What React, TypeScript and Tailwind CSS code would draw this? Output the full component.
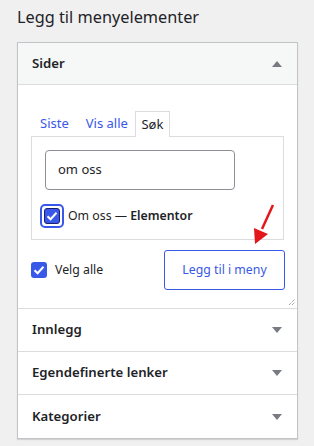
import React from "react";

const font = { fontFamily: '"Noto Sans", "Open Sans", sans-serif' };

const Caret = ({ up = false }: { up?: boolean }) => (
  <svg width="10" height="6" viewBox="0 0 10 6" className="mr-[15px]">
    {up ? <path d="M0 6 L5 0 L10 6 Z" fill="#787c82" /> : <path d="M0 0 L5 6 L10 0 Z" fill="#787c82" />}
  </svg>
);

const Section = ({ title }: { title: string }) => (
  <div className="flex h-[43px] items-center justify-between border-b border-[#dcdcde] pl-[14px] last:border-b-0">
    <span className="text-[13.2px] font-semibold text-[#1d2327]">{title}</span>
    <Caret />
  </div>
);

const Check = () => (
  <svg width="12" height="10" viewBox="0 0 12 10">
    <path d="M1.5 5.2 L4.6 8.2 L10.5 1.8" stroke="#fff" strokeWidth="2" fill="none" />
  </svg>
);

export default function App() {
  return (
    <div className="h-screen w-full bg-[#f0f0f1] pl-[17px] pt-[6px] text-[#1d2327]" style={font}>
      <h2 className="text-[16.3px] leading-[22px]">Legg til menyelementer</h2>
      <div className="mt-[14px] w-[281px] border border-[#c3c4c7] bg-white shadow-[0_1px_1px_rgba(0,0,0,0.12)]">
        <div className="flex h-[42px] items-center justify-between border-b border-[#dcdcde] bg-[#f6f7f7] pl-[14px]">
          <span className="text-[13.2px] font-semibold">Sider</span>
          <Caret up />
        </div>
        <div className="relative border-b border-[#dcdcde] px-[13px] pb-[18px] pt-[26px]">
          <div className="flex items-end pl-[9px] text-[13px]">
            <span className="mr-[17px] pb-[3px] text-[#3858e9]">Siste</span>
            <span className="mr-[7px] pb-[3px] text-[#3858e9]">Vis alle</span>
            <span className="-mb-px flex h-[26px] w-[35px] items-center justify-center border border-b-0 border-[#dcdcde] bg-white">Søk</span>
          </div>
          <div className="border border-[#dcdcde] px-[13px] pb-[11px] pt-[13px]">
            <div className="flex h-[40px] w-[190px] items-center rounded-[4px] border border-[#8c8f94] px-[12px] text-[13px]">
              om oss
            </div>
            <div className="mt-[14px] flex items-center">
              <span className="-ml-[5px] flex h-[24px] w-[24px] items-center justify-center rounded-[5px] border-2 border-[#3858e9]">
                <span className="flex h-[16px] w-[16px] items-center justify-center rounded-[3px] border border-[#1e1e6e] bg-[#3858e9]">
                  <Check />
                </span>
              </span>
              <span className="ml-[4px] text-[12.3px]">
                Om oss — <b className="font-semibold">Elementor</b>
              </span>
            </div>
          </div>
          <div className="mt-[10px] flex items-center justify-between">
            <div className="flex items-center">
              <span className="flex h-[16px] w-[16px] items-center justify-center rounded-[3px] bg-[#3858e9]">
                <Check />
              </span>
              <span className="ml-[8px] text-[12.3px]">Velg alle</span>
            </div>
            <div className="-mr-px flex h-[40px] w-[121px] items-center justify-center rounded-[3px] border border-[#3858e9] text-[12.3px] text-[#3858e9]">
              Legg til i meny
            </div>
          </div>
          <svg className="absolute bottom-[2px] right-[1px]" width="8" height="8" viewBox="0 0 8 8">
            <path d="M1 7 L7 1 M4 7 L7 4" stroke="#787c82" strokeWidth="1" strokeDasharray="1 1" />
          </svg>
          <svg className="absolute left-[236px] top-[119px]" width="22" height="42" viewBox="0 0 22 42">
            <path d="M19 1 L8 25" stroke="#e3161b" strokeWidth="2.5" />
            <path d="M0 24 L14 30 L1 40 Z" fill="#e3161b" />
          </svg>
        </div>
        <Section title="Innlegg" />
        <Section title="Egendefinerte lenker" />
        <Section title="Kategorier" />
      </div>
    </div>
  );
}
